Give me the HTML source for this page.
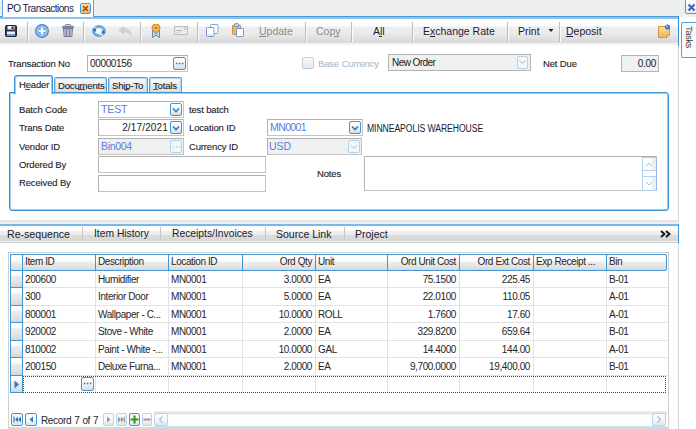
<!DOCTYPE html>
<html><head><meta charset="utf-8">
<style>
*{box-sizing:border-box;margin:0;padding:0}
html,body{width:696px;height:429px;overflow:hidden;background:#fff}
body{position:relative;font-family:"Liberation Sans",sans-serif;font-size:10px;color:#1a1a2a}
.a{position:absolute}
.t{position:absolute;white-space:pre;line-height:1}
.sep{position:absolute;top:22px;width:2px;height:20px;background:linear-gradient(90deg,#bdbdbd 50%,#fbfbfb 50%)}
.tb{position:absolute;border:1px solid #c4c4c4;border-top-color:#b0b0b0;border-left-color:#b4b4b4;background:#fff}
.dd{position:absolute;width:12px;height:13px;border:1.5px solid #3d96d6;border-radius:2px;background:linear-gradient(#fdfdfd 0%,#f2f2f2 55%,#dcdcdc 100%)}
.dd svg{position:absolute;left:1px;top:2px}
.gh{position:absolute;top:255px;height:15px;background:linear-gradient(#fefefe 0%,#fbfbfb 40%,#ececec 48%,#e4e4e4 75%,#d8d8d8 100%)}
.lbl{position:absolute;white-space:pre;line-height:1;font-size:9.5px;letter-spacing:-0.15px;color:#1a1a26;-webkit-text-stroke:0.1px currentColor}
.gt{position:absolute;white-space:pre;line-height:1;font-size:10px;letter-spacing:-0.4px;color:#262626}
</style></head><body>

<!-- top tab strip -->
<div class="a" style="left:0;top:0;width:696px;height:17px;background:#eeefef"></div>
<div class="a" style="left:2px;top:0;width:92px;height:17px;background:#fff;border:1px solid #5aa2d9;border-top:none;border-bottom:none"></div>
<div class="t" style="left:7px;top:4px;font-size:10px;letter-spacing:-0.5px;color:#1a1a40">PO Transactions</div>
<div class="a" style="left:80px;top:3px;width:11px;height:11px;border:1px solid #4a9ad6;border-radius:2px;background:linear-gradient(#fde0b0,#f4b66a)"></div>
<svg class="a" style="left:82px;top:5px" width="7" height="7"><path d="M1 1L6 6M6 1L1 6" stroke="#9a4a10" stroke-width="1.6"/></svg>
<!-- window close X -->
<div class="a" style="left:685px;top:-2px;width:13px;height:16px;border:1px solid #4a98d6;border-radius:2px;background:linear-gradient(#ffffff,#e8ecf0)"></div>
<svg class="a" style="left:687px;top:3px" width="9" height="9"><path d="M1.5 1.5L7.5 7.5M7.5 1.5L1.5 7.5" stroke="#2a6cc0" stroke-width="2"/></svg>

<!-- blue line -->
<div class="a" style="left:0;top:16px;width:3px;height:1px;background:#4b9bd8"></div>
<div class="a" style="left:93px;top:16px;width:586px;height:1px;background:#4b9bd8"></div>
<div class="a" style="left:0;top:17px;width:679px;height:2px;background:#8ec2e8"></div>
<div class="a" style="left:678px;top:16px;width:1px;height:30px;background:#3c8fd0"></div>

<!-- Tasks side tab -->
<div class="a" style="left:681px;top:22px;width:16px;height:36px;border:1px solid #5a9ed8;border-right:none;border-radius:2px 0 0 2px;background:#fafbfc"></div>
<div class="t" style="left:684px;top:26px;font-size:9.5px;letter-spacing:-0.5px;writing-mode:vertical-rl;color:#3a3a3a">Tasks</div>

<!-- toolbar -->
<div class="a" style="left:0;top:19px;width:678px;height:27px;background:linear-gradient(#fff 0px,#fdfdfd 7px,#eeeeee 8px,#ebebeb 15px,#e5e5e5 16px,#e3e3e3 19px,#dcdcdc 20px,#dadada 24px,#f3f3f3 24px,#f3f3f3 26px,#fff 26px)"></div>
<div class="sep" style="left:27px"></div>
<div class="sep" style="left:83px"></div>
<div class="sep" style="left:140px"></div>
<div class="sep" style="left:197px"></div>
<div class="sep" style="left:305px"></div>
<div class="sep" style="left:351px"></div>
<div class="sep" style="left:412px"></div>
<div class="sep" style="left:507px"></div>
<div class="sep" style="left:559px"></div>

<!-- icons -->
<svg class="a" style="left:5px;top:25px" width="12" height="12" viewBox="0 0 12 12">
 <rect x="0.5" y="0.5" width="11" height="11" rx="1" fill="#2f3a4a" stroke="#1d2430"/>
 <rect x="2.5" y="1" width="7" height="3.5" fill="#f4f4f4"/><rect x="6.5" y="1.5" width="2" height="2.5" fill="#222"/>
 <rect x="2" y="6.5" width="8" height="4.5" fill="#eef4fa"/><rect x="2" y="9" width="8" height="2" fill="#5fa0dc"/>
</svg>
<svg class="a" style="left:35px;top:24px" width="14" height="14" viewBox="0 0 14 14">
 <circle cx="7" cy="7" r="6.4" fill="#74b2ea" stroke="#4a86c8" stroke-width="1.1"/>
 <circle cx="7" cy="7" r="5" fill="none" stroke="#a8d2f4" stroke-width="0.8"/>
 <path d="M7 3.6V10.4M3.6 7H10.4" stroke="#fff" stroke-width="2.2"/>
</svg>
<svg class="a" style="left:62px;top:24px" width="12" height="13" viewBox="0 0 12 13">
 <rect x="3.5" y="0.5" width="5" height="2" rx="0.8" fill="none" stroke="#6a7088" stroke-width="0.9"/>
 <rect x="0.5" y="2.2" width="11" height="2" rx="0.8" fill="#8a90a4" stroke="#6a7088" stroke-width="0.8"/>
 <path d="M1.5 4.5H10.5L9.8 12.5H2.2Z" fill="#a4aabc" stroke="#6a7088" stroke-width="0.9"/>
 <path d="M4.2 5.5V11.5M7.8 5.5V11.5" stroke="#6a7088" stroke-width="1"/>
 <path d="M3 5.5V11.5M6 5.5V11.5M9 5.5V11.5" stroke="#d4d8e4" stroke-width="0.8"/>
</svg>
<svg class="a" style="left:92px;top:25px" width="14" height="12" viewBox="0 0 14 12">
 <ellipse cx="7" cy="6" rx="5.3" ry="4.3" fill="none" stroke="#6cb0ea" stroke-width="2.4"/>
 <ellipse cx="7" cy="6" rx="6.5" ry="5.5" fill="none" stroke="#3d7cc8" stroke-width="0.7" opacity="0.8"/>
 <path d="M2.5 2.5L7.5 6L5 7.5L11 10.5" fill="none" stroke="#fff" stroke-width="1.3"/>
 <path d="M0.5 4.5L4.5 3L3.5 7Z" fill="#2f6ec4"/><path d="M13.5 7.5L9.5 9L10.5 5Z" fill="#2f6ec4"/>
</svg>
<svg class="a" style="left:118px;top:26px" width="14" height="10" viewBox="0 0 14 10">
 <path d="M1 4L5.5 0.5V2.5C9.5 2.5 12.5 4.5 13 9C11 6.5 9 5.8 5.5 5.8V7.8Z" fill="#d2d2d2" stroke="#bdbdbd" stroke-width="0.6"/>
</svg>
<svg class="a" style="left:151px;top:24px" width="10" height="14" viewBox="0 0 10 14">
 <path d="M1.5 6.5H8.5V13.5L5 11.2L1.5 13.5Z" fill="#b4d8f4" stroke="#4a74b8" stroke-width="0.8"/>
 <path d="M5 10L1.6 5.8A4 4 0 1 1 8.4 5.8Z" fill="#f2a93a" stroke="#c47a1a" stroke-width="0.8"/>
 <circle cx="5" cy="4" r="2.6" fill="#f8c060"/>
 <rect x="3.8" y="3.2" width="2.4" height="1.6" fill="#a05a10"/>
</svg>
<svg class="a" style="left:174px;top:26px" width="14" height="9" viewBox="0 0 14 9">
 <rect x="0.5" y="0.5" width="13" height="8" fill="#ececec" stroke="#bcbcbc"/>
 <path d="M2.5 4.5H7.5" stroke="#b0b0b0"/><path d="M2.5 6.5H6" stroke="#d4d4d4"/><rect x="10.5" y="1.8" width="1.6" height="1.6" fill="none" stroke="#c0c0c0" stroke-width="0.7"/>
</svg>
<svg class="a" style="left:206px;top:24px" width="13" height="13" viewBox="0 0 13 13">
 <rect x="4.5" y="0.5" width="7.5" height="9" rx="0.8" fill="#fff" stroke="#88a6d8"/>
 <rect x="0.5" y="3.5" width="7.5" height="9" rx="0.8" fill="#fff" stroke="#7896d0"/>
 <rect x="1.5" y="10" width="6" height="2" fill="#dde6f4"/>
</svg>
<svg class="a" style="left:232px;top:23px" width="12" height="14" viewBox="0 0 12 14">
 <rect x="0.5" y="2" width="8" height="9.5" rx="1" fill="#f0b860" stroke="#c88a3a" stroke-width="0.9"/>
 <rect x="2.5" y="0.5" width="4" height="3" rx="1" fill="#c8d4ec" stroke="#6a7ab0" stroke-width="0.8"/>
 <rect x="4.5" y="5.5" width="7" height="8" rx="0.6" fill="#fff" stroke="#7896d0"/>
</svg>
<svg class="a" style="left:658px;top:24px" width="13" height="14" viewBox="0 0 13 14">
 <defs><linearGradient id="ng" x1="0" y1="0" x2="0" y2="1"><stop offset="0" stop-color="#fde2a8"/><stop offset="1" stop-color="#f0b058"/></linearGradient></defs>
 <path d="M0.5 2.5H11.5V11L9 13.5H0.5Z" fill="url(#ng)" stroke="#d0943c"/>
 <path d="M9 13.5V11H11.5" fill="#f8d89a" stroke="#d0943c" stroke-width="0.8"/>
 <circle cx="9.5" cy="3" r="2.6" fill="#3a7ed0"/><circle cx="9" cy="2.4" r="1" fill="#9cc8f4"/>
</svg>

<!-- toolbar text -->
<div class="t" style="left:259px;top:26px;font-size:10.5px;color:#8a8a8a">Update</div>
<div class="a" style="left:259px;top:36px;width:7px;height:1px;background:#8a8a8a"></div>
<div class="t" style="left:316px;top:26px;font-size:10.5px;color:#8a8a8a">Copy</div>
<div class="t" style="left:373px;top:26px;font-size:10.5px;color:#1a1a38">All</div>
<div class="a" style="left:379px;top:36px;width:3px;height:1px;background:#1a1a38"></div>
<div class="t" style="left:423px;top:26px;font-size:10.5px;color:#1a1a38">Exchange Rate</div>
<div class="a" style="left:430px;top:36px;width:5px;height:1px;background:#1a1a38"></div>
<div class="t" style="left:518px;top:26px;font-size:10.5px;color:#1a1a38">Print</div>
<svg class="a" style="left:548px;top:29px" width="6" height="4"><path d="M0.5 0H5.5L3 3Z" fill="#222"/></svg>
<div class="t" style="left:566px;top:26px;font-size:10.5px;color:#1a1a38">Deposit</div>
<div class="a" style="left:566px;top:36px;width:7px;height:1px;background:#1a1a38"></div>

<!-- content right border -->
<div class="a" style="left:678px;top:46px;width:1px;height:175px;background:#d6d6d6"></div>
<div class="a" style="left:0;top:220px;width:679px;height:4px;background:linear-gradient(#e0e0e0,#f4f4f4)"></div>

<!-- Transaction row -->
<div class="lbl" style="left:8px;top:59px">Transaction No</div>
<div class="tb" style="left:87px;top:55px;width:101px;height:17px"></div>
<div class="t" style="left:90px;top:59px;font-size:10px;letter-spacing:-0.35px;color:#1a1a1a">00000156</div>
<div class="a" style="left:173px;top:57px;width:13px;height:13px;border:1px solid #3b93d4;border-radius:2px;background:linear-gradient(#fdfdfd 0%,#f4f4f4 50%,#dadada 100%)"></div>
<svg class="a" style="left:175px;top:62px" width="10" height="3"><path d="M0.8 1.5h1.6M3.8 1.5h1.6M6.8 1.5h1.6" stroke="#2a78c8" stroke-width="1.7"/></svg>

<div class="a" style="left:302px;top:57px;width:12px;height:12px;border:1px solid #b8d0e4;border-radius:2px;background:linear-gradient(#fafafa,#e4e8ec)"></div>
<div class="lbl" style="left:318px;top:59px;color:#a8bcd0">Base Currency</div>
<div class="a" style="left:388px;top:54px;width:143px;height:17px;border:1px solid #b4b4b4;background:#eff0f0"></div>
<div class="t" style="left:392px;top:58px;font-size:10px;letter-spacing:-0.55px;color:#1a1a1a">New Order</div>
<div class="a" style="left:517px;top:56px;width:11px;height:13px;border:1px solid #b4d0ea;border-radius:2px;background:#f4f7fa"></div>
<svg class="a" style="left:519px;top:60px" width="7" height="5"><path d="M0.5 0.5L3.5 3.5L6.5 0.5" fill="none" stroke="#9ab8d8" stroke-width="1"/></svg>
<div class="lbl" style="left:543px;top:59px">Net Due</div>
<div class="a" style="left:621px;top:55px;width:38px;height:17px;border:1px solid #b4b4b4;background:#eff0f0"></div>
<div class="t" style="left:624px;top:59px;width:32px;text-align:right;font-size:10px;letter-spacing:-0.3px;color:#1a1a1a">0.00</div>

<!-- tabs -->
<div class="a" style="left:9px;top:92px;width:660px;height:119px;border:1px solid #3a93d4;box-shadow:inset 0 0 0 1px #9fcdee;border-radius:0 3px 3px 3px;background:#fff"></div>
<div class="a" style="left:54px;top:77px;width:53px;height:15px;border:1px solid #56a2da;border-bottom:none;border-radius:2px 2px 0 0;box-shadow:inset 1px 1px 0 #b4d8f2,inset -1px 0 0 #b4d8f2;background:linear-gradient(#fbfbfb,#e8e8e8 60%,#dedede)"></div>
<div class="a" style="left:108px;top:77px;width:40px;height:15px;border:1px solid #56a2da;border-bottom:none;border-radius:2px 2px 0 0;box-shadow:inset 1px 1px 0 #b4d8f2,inset -1px 0 0 #b4d8f2;background:linear-gradient(#fbfbfb,#e8e8e8 60%,#dedede)"></div>
<div class="a" style="left:149px;top:77px;width:33px;height:15px;border:1px solid #56a2da;border-bottom:none;border-radius:2px 2px 0 0;box-shadow:inset 1px 1px 0 #b4d8f2,inset -1px 0 0 #b4d8f2;background:linear-gradient(#fbfbfb,#e8e8e8 60%,#dedede)"></div>
<div class="a" style="left:14px;top:75px;width:39px;height:19px;border:1px solid #3a93d4;border-bottom:none;border-radius:3px 3px 0 0;background:#fff;box-shadow:inset 1px 1px 0 #9fcdee,inset -1px 0 0 #9fcdee"></div>
<div class="lbl" style="left:19px;top:80px">Header</div>
<div class="lbl" style="left:58px;top:81px">Documents</div>
<div class="lbl" style="left:112px;top:81px">Ship-To</div>
<div class="lbl" style="left:153px;top:81px">Totals</div>

<div class="a" style="left:25px;top:89px;width:5px;height:1px;background:#555"></div>
<div class="a" style="left:78px;top:89px;width:7px;height:1px;background:#555"></div>
<div class="a" style="left:124px;top:89px;width:5px;height:1px;background:#555"></div>
<div class="a" style="left:153px;top:89px;width:5px;height:1px;background:#555"></div>
<div class="a" style="left:334px;top:36px;width:5px;height:1px;background:#8a8a8a"></div>
<!-- header panel fields -->
<div class="lbl" style="left:19px;top:105px">Batch Code</div>
<div class="lbl" style="left:19px;top:123px">Trans Date</div>
<div class="lbl" style="left:19px;top:142px">Vendor ID</div>
<div class="lbl" style="left:19px;top:160px">Ordered By</div>
<div class="lbl" style="left:19px;top:178px">Received By</div>

<div class="tb" style="left:98px;top:101px;width:86px;height:17px"></div>
<div class="t" style="left:101px;top:104px;font-size:10.5px;letter-spacing:-0.1px;color:#5a7edc">TEST</div>
<div class="dd" style="left:170px;top:103px"><svg width="10" height="11" style="position:absolute;left:0;top:0"><path d="M2 4.5L5 7.5L8 4.5" fill="none" stroke="#2a7ec8" stroke-width="1.6"/></svg></div>
<div class="tb" style="left:98px;top:119px;width:86px;height:17px"></div>
<div class="t" style="left:100px;top:123px;width:68px;text-align:right;font-size:10px;letter-spacing:0.15px;color:#1a1a1a">2/17/2021</div>
<div class="dd" style="left:170px;top:121px"><svg width="10" height="11" style="position:absolute;left:0;top:0"><path d="M2 4.5L5 7.5L8 4.5" fill="none" stroke="#2a7ec8" stroke-width="1.6"/></svg></div>
<div class="tb" style="left:98px;top:138px;width:86px;height:17px;background:#eff0f0"></div>
<div class="t" style="left:101px;top:141px;font-size:10.5px;letter-spacing:-0.3px;color:#5a7edc">Bin004</div>
<div class="a" style="left:170px;top:140px;width:12px;height:13px;border:1px solid #b4d0ea;border-radius:2px;background:#f4f7fa"></div>
<svg class="a" style="left:172px;top:146px" width="9" height="2"><path d="M0.5 1h1.2M3.9 1h1.2M7.3 1h1.2" stroke="#8ab4dc" stroke-width="1.2"/></svg>
<div class="tb" style="left:98px;top:156px;width:168px;height:17px"></div>
<div class="tb" style="left:98px;top:175px;width:168px;height:17px"></div>

<div class="lbl" style="left:189px;top:105px">test batch</div>
<div class="lbl" style="left:189px;top:123px">Location ID</div>
<div class="lbl" style="left:189px;top:142px">Currency ID</div>
<div class="tb" style="left:267px;top:119px;width:96px;height:17px"></div>
<div class="t" style="left:270px;top:122px;font-size:10.5px;letter-spacing:-0.6px;color:#5a7edc">MN0001</div>
<div class="dd" style="left:349px;top:121px"><svg width="10" height="11" style="position:absolute;left:0;top:0"><path d="M2 4.5L5 7.5L8 4.5" fill="none" stroke="#2a7ec8" stroke-width="1.6"/></svg></div>
<div class="tb" style="left:267px;top:138px;width:95px;height:17px;background:#eff0f0"></div>
<div class="t" style="left:269px;top:141px;font-size:10.5px;letter-spacing:-0.1px;color:#5a7edc">USD</div>
<div class="a" style="left:348px;top:140px;width:12px;height:13px;border:1px solid #b4d0ea;border-radius:2px;background:#f4f7fa"></div>
<svg class="a" style="left:350px;top:145px" width="8" height="5"><path d="M1 0.5L4 3.5L7 0.5" fill="none" stroke="#9cc0e0" stroke-width="1"/></svg>
<div class="t" style="left:367px;top:124px;font-size:10px;letter-spacing:-0.1px;transform:scaleX(0.865);transform-origin:0 0;color:#20202c">MINNEAPOLIS WAREHOUSE</div>
<div class="lbl" style="left:317px;top:169px">Notes</div>
<div class="tb" style="left:364px;top:156px;width:293px;height:35px"></div>
<div class="a" style="left:642px;top:157px;width:15px;height:34px;border:1px solid #b4d2ec;border-right-color:#9fb4dc;background:linear-gradient(90deg,#fdfdfd 70%,#eeeeee 70%)"></div>
<div class="a" style="left:643px;top:170px;width:13px;height:1px;background:#b4d2ec"></div>
<div class="a" style="left:643px;top:176px;width:13px;height:1px;background:#b4d2ec"></div>
<div class="a" style="left:643px;top:171px;width:13px;height:5px;background:#fafcfd"></div>
<svg class="a" style="left:645px;top:162px" width="8" height="5"><path d="M1 4L4 1L7 4" fill="none" stroke="#9cc0e0" stroke-width="1"/></svg>
<svg class="a" style="left:645px;top:181px" width="8" height="5"><path d="M1 1L4 4L7 1" fill="none" stroke="#9cc0e0" stroke-width="1"/></svg>

<!-- lower tab bar -->
<div class="a" style="left:0;top:224px;width:679px;height:19px;border-top:2px solid #7db8e4;border-right:1px solid #3c93d4;background:linear-gradient(#fdfdfd 0px,#fdfdfd 5px,#efefef 5px,#ececec 9px,#dcdcdc 9px,#d8d8d8 15px,#f6f6f6 15px,#f6f6f6 16px,#c8c8c8 16px)"></div>
<div class="t" style="left:7px;top:229px;font-size:10.6px;color:#1a1a2a">Re-sequence</div>
<div class="t" style="left:94px;top:229px;font-size:10.3px;color:#1a1a2a">Item History</div>
<div class="t" style="left:172px;top:229px;font-size:10.3px;color:#1a1a2a">Receipts/Invoices</div>
<div class="t" style="left:276px;top:229px;font-size:10.5px;color:#1a1a2a">Source Link</div>
<div class="t" style="left:355px;top:229px;font-size:10.5px;color:#1a1a2a">Project</div>
<div class="a" style="left:82px;top:227px;width:1px;height:14px;background:#c8c8c8"></div>
<div class="a" style="left:160px;top:227px;width:1px;height:14px;background:#c8c8c8"></div>
<div class="a" style="left:265px;top:227px;width:1px;height:14px;background:#c8c8c8"></div>
<div class="a" style="left:344px;top:227px;width:1px;height:14px;background:#c8c8c8"></div>
<svg class="a" style="left:660px;top:230px" width="11" height="8" viewBox="0 0 11 8"><path d="M1 1L4.5 4L1 7M6 1L9.5 4L6 7" fill="none" stroke="#111" stroke-width="1.8"/></svg>

<!-- lower content border -->
<div class="a" style="left:678px;top:243px;width:1px;height:186px;background:#d6d6d6"></div>

<!-- grid -->
<div class="a" style="left:8px;top:252px;width:661px;height:177px;border:1px solid #cfcfcf;border-bottom:2px solid #d6d6d6"></div>
<div class="gh" style="left:11px;width:656px"></div>
<div class="a" style="left:10px;top:254px;width:657px;height:17px;border:1px solid #4196d6;border-radius:2px"></div>
<div class="a" style="left:10px;top:254px;width:13px;height:139px;border:1px solid #4196d6;border-top:none"></div>
<div class="a" style="left:22px;top:255px;width:1px;height:15px;background:#4196d6"></div>
<div class="a" style="left:95px;top:255px;width:1px;height:15px;background:#4196d6"></div>
<div class="a" style="left:168px;top:255px;width:1px;height:15px;background:#4196d6"></div>
<div class="a" style="left:242px;top:255px;width:1px;height:15px;background:#4196d6"></div>
<div class="a" style="left:315px;top:255px;width:1px;height:15px;background:#4196d6"></div>
<div class="a" style="left:387px;top:255px;width:1px;height:15px;background:#4196d6"></div>
<div class="a" style="left:459px;top:255px;width:1px;height:15px;background:#4196d6"></div>
<div class="a" style="left:533px;top:255px;width:1px;height:15px;background:#4196d6"></div>
<div class="a" style="left:606px;top:255px;width:1px;height:15px;background:#4196d6"></div>
<div class="gt" style="left:25px;top:257px">Item ID</div>
<div class="gt" style="left:98px;top:257px">Description</div>
<div class="gt" style="left:171px;top:257px">Location ID</div>
<div class="gt" style="left:242px;top:257px;width:70px;text-align:right">Ord Qty</div>
<div class="gt" style="left:318px;top:257px">Unit</div>
<div class="gt" style="left:387px;top:257px;width:69px;text-align:right">Ord Unit Cost</div>
<div class="gt" style="left:459px;top:257px;width:71px;text-align:right">Ord Ext Cost</div>
<div class="gt" style="left:536px;top:257px">Exp Receipt ...</div>
<div class="gt" style="left:609px;top:257px">Bin</div>
<div class="a" style="left:11px;top:271px;width:11px;height:16px;background:linear-gradient(#fdfdfd 0%,#fafafa 30%,#ebebeb 35%,#e4e4e4 70%,#d6d6d6 100%)"></div>
<div class="a" style="left:10px;top:287px;width:13px;height:1px;background:#4196d6"></div>
<div class="a" style="left:23px;top:287px;width:644px;height:1px;background:#e2e2e2"></div>
<div class="a" style="left:95px;top:271px;width:1px;height:17px;background:#e2e2e2"></div>
<div class="a" style="left:168px;top:271px;width:1px;height:17px;background:#e2e2e2"></div>
<div class="a" style="left:242px;top:271px;width:1px;height:17px;background:#e2e2e2"></div>
<div class="a" style="left:315px;top:271px;width:1px;height:17px;background:#e2e2e2"></div>
<div class="a" style="left:387px;top:271px;width:1px;height:17px;background:#e2e2e2"></div>
<div class="a" style="left:459px;top:271px;width:1px;height:17px;background:#e2e2e2"></div>
<div class="a" style="left:533px;top:271px;width:1px;height:17px;background:#e2e2e2"></div>
<div class="a" style="left:606px;top:271px;width:1px;height:17px;background:#e2e2e2"></div>
<div class="gt" style="left:25px;top:275px">200600</div>
<div class="gt" style="left:98px;top:275px">Humidifier</div>
<div class="gt" style="left:171px;top:275px">MN0001</div>
<div class="gt" style="left:242px;top:275px;width:70px;text-align:right">3.0000</div>
<div class="gt" style="left:318px;top:275px">EA</div>
<div class="gt" style="left:387px;top:275px;width:69px;text-align:right">75.1500</div>
<div class="gt" style="left:459px;top:275px;width:71px;text-align:right">225.45</div>
<div class="gt" style="left:609px;top:275px">B-01</div>
<div class="a" style="left:11px;top:288px;width:11px;height:17px;background:linear-gradient(#fdfdfd 0%,#fafafa 30%,#ebebeb 35%,#e4e4e4 70%,#d6d6d6 100%)"></div>
<div class="a" style="left:10px;top:305px;width:13px;height:1px;background:#4196d6"></div>
<div class="a" style="left:23px;top:305px;width:644px;height:1px;background:#e2e2e2"></div>
<div class="a" style="left:95px;top:288px;width:1px;height:18px;background:#e2e2e2"></div>
<div class="a" style="left:168px;top:288px;width:1px;height:18px;background:#e2e2e2"></div>
<div class="a" style="left:242px;top:288px;width:1px;height:18px;background:#e2e2e2"></div>
<div class="a" style="left:315px;top:288px;width:1px;height:18px;background:#e2e2e2"></div>
<div class="a" style="left:387px;top:288px;width:1px;height:18px;background:#e2e2e2"></div>
<div class="a" style="left:459px;top:288px;width:1px;height:18px;background:#e2e2e2"></div>
<div class="a" style="left:533px;top:288px;width:1px;height:18px;background:#e2e2e2"></div>
<div class="a" style="left:606px;top:288px;width:1px;height:18px;background:#e2e2e2"></div>
<div class="gt" style="left:25px;top:292px">300</div>
<div class="gt" style="left:98px;top:292px">Interior Door</div>
<div class="gt" style="left:171px;top:292px">MN0001</div>
<div class="gt" style="left:242px;top:292px;width:70px;text-align:right">5.0000</div>
<div class="gt" style="left:318px;top:292px">EA</div>
<div class="gt" style="left:387px;top:292px;width:69px;text-align:right">22.0100</div>
<div class="gt" style="left:459px;top:292px;width:71px;text-align:right">110.05</div>
<div class="gt" style="left:609px;top:292px">A-01</div>
<div class="a" style="left:11px;top:306px;width:11px;height:16px;background:linear-gradient(#fdfdfd 0%,#fafafa 30%,#ebebeb 35%,#e4e4e4 70%,#d6d6d6 100%)"></div>
<div class="a" style="left:10px;top:322px;width:13px;height:1px;background:#4196d6"></div>
<div class="a" style="left:23px;top:322px;width:644px;height:1px;background:#e2e2e2"></div>
<div class="a" style="left:95px;top:306px;width:1px;height:17px;background:#e2e2e2"></div>
<div class="a" style="left:168px;top:306px;width:1px;height:17px;background:#e2e2e2"></div>
<div class="a" style="left:242px;top:306px;width:1px;height:17px;background:#e2e2e2"></div>
<div class="a" style="left:315px;top:306px;width:1px;height:17px;background:#e2e2e2"></div>
<div class="a" style="left:387px;top:306px;width:1px;height:17px;background:#e2e2e2"></div>
<div class="a" style="left:459px;top:306px;width:1px;height:17px;background:#e2e2e2"></div>
<div class="a" style="left:533px;top:306px;width:1px;height:17px;background:#e2e2e2"></div>
<div class="a" style="left:606px;top:306px;width:1px;height:17px;background:#e2e2e2"></div>
<div class="gt" style="left:25px;top:310px">800001</div>
<div class="gt" style="left:98px;top:310px">Wallpaper - C...</div>
<div class="gt" style="left:171px;top:310px">MN0001</div>
<div class="gt" style="left:242px;top:310px;width:70px;text-align:right">10.0000</div>
<div class="gt" style="left:318px;top:310px">ROLL</div>
<div class="gt" style="left:387px;top:310px;width:69px;text-align:right">1.7600</div>
<div class="gt" style="left:459px;top:310px;width:71px;text-align:right">17.60</div>
<div class="gt" style="left:609px;top:310px">A-01</div>
<div class="a" style="left:11px;top:323px;width:11px;height:17px;background:linear-gradient(#fdfdfd 0%,#fafafa 30%,#ebebeb 35%,#e4e4e4 70%,#d6d6d6 100%)"></div>
<div class="a" style="left:10px;top:340px;width:13px;height:1px;background:#4196d6"></div>
<div class="a" style="left:23px;top:340px;width:644px;height:1px;background:#e2e2e2"></div>
<div class="a" style="left:95px;top:323px;width:1px;height:18px;background:#e2e2e2"></div>
<div class="a" style="left:168px;top:323px;width:1px;height:18px;background:#e2e2e2"></div>
<div class="a" style="left:242px;top:323px;width:1px;height:18px;background:#e2e2e2"></div>
<div class="a" style="left:315px;top:323px;width:1px;height:18px;background:#e2e2e2"></div>
<div class="a" style="left:387px;top:323px;width:1px;height:18px;background:#e2e2e2"></div>
<div class="a" style="left:459px;top:323px;width:1px;height:18px;background:#e2e2e2"></div>
<div class="a" style="left:533px;top:323px;width:1px;height:18px;background:#e2e2e2"></div>
<div class="a" style="left:606px;top:323px;width:1px;height:18px;background:#e2e2e2"></div>
<div class="gt" style="left:25px;top:327px">920002</div>
<div class="gt" style="left:98px;top:327px">Stove - White</div>
<div class="gt" style="left:171px;top:327px">MN0001</div>
<div class="gt" style="left:242px;top:327px;width:70px;text-align:right">2.0000</div>
<div class="gt" style="left:318px;top:327px">EA</div>
<div class="gt" style="left:387px;top:327px;width:69px;text-align:right">329.8200</div>
<div class="gt" style="left:459px;top:327px;width:71px;text-align:right">659.64</div>
<div class="gt" style="left:609px;top:327px">B-01</div>
<div class="a" style="left:11px;top:341px;width:11px;height:16px;background:linear-gradient(#fdfdfd 0%,#fafafa 30%,#ebebeb 35%,#e4e4e4 70%,#d6d6d6 100%)"></div>
<div class="a" style="left:10px;top:357px;width:13px;height:1px;background:#4196d6"></div>
<div class="a" style="left:23px;top:357px;width:644px;height:1px;background:#e2e2e2"></div>
<div class="a" style="left:95px;top:341px;width:1px;height:17px;background:#e2e2e2"></div>
<div class="a" style="left:168px;top:341px;width:1px;height:17px;background:#e2e2e2"></div>
<div class="a" style="left:242px;top:341px;width:1px;height:17px;background:#e2e2e2"></div>
<div class="a" style="left:315px;top:341px;width:1px;height:17px;background:#e2e2e2"></div>
<div class="a" style="left:387px;top:341px;width:1px;height:17px;background:#e2e2e2"></div>
<div class="a" style="left:459px;top:341px;width:1px;height:17px;background:#e2e2e2"></div>
<div class="a" style="left:533px;top:341px;width:1px;height:17px;background:#e2e2e2"></div>
<div class="a" style="left:606px;top:341px;width:1px;height:17px;background:#e2e2e2"></div>
<div class="gt" style="left:25px;top:345px">810002</div>
<div class="gt" style="left:98px;top:345px">Paint - White -...</div>
<div class="gt" style="left:171px;top:345px">MN0001</div>
<div class="gt" style="left:242px;top:345px;width:70px;text-align:right">10.0000</div>
<div class="gt" style="left:318px;top:345px">GAL</div>
<div class="gt" style="left:387px;top:345px;width:69px;text-align:right">14.4000</div>
<div class="gt" style="left:459px;top:345px;width:71px;text-align:right">144.00</div>
<div class="gt" style="left:609px;top:345px">A-01</div>
<div class="a" style="left:11px;top:358px;width:11px;height:17px;background:linear-gradient(#fdfdfd 0%,#fafafa 30%,#ebebeb 35%,#e4e4e4 70%,#d6d6d6 100%)"></div>
<div class="a" style="left:10px;top:375px;width:13px;height:1px;background:#4196d6"></div>
<div class="a" style="left:23px;top:375px;width:644px;height:1px;background:#e2e2e2"></div>
<div class="a" style="left:95px;top:358px;width:1px;height:18px;background:#e2e2e2"></div>
<div class="a" style="left:168px;top:358px;width:1px;height:18px;background:#e2e2e2"></div>
<div class="a" style="left:242px;top:358px;width:1px;height:18px;background:#e2e2e2"></div>
<div class="a" style="left:315px;top:358px;width:1px;height:18px;background:#e2e2e2"></div>
<div class="a" style="left:387px;top:358px;width:1px;height:18px;background:#e2e2e2"></div>
<div class="a" style="left:459px;top:358px;width:1px;height:18px;background:#e2e2e2"></div>
<div class="a" style="left:533px;top:358px;width:1px;height:18px;background:#e2e2e2"></div>
<div class="a" style="left:606px;top:358px;width:1px;height:18px;background:#e2e2e2"></div>
<div class="gt" style="left:25px;top:362px">200150</div>
<div class="gt" style="left:98px;top:362px">Deluxe Furna...</div>
<div class="gt" style="left:171px;top:362px">MN0001</div>
<div class="gt" style="left:242px;top:362px;width:70px;text-align:right">2.0000</div>
<div class="gt" style="left:318px;top:362px">EA</div>
<div class="gt" style="left:387px;top:362px;width:69px;text-align:right">9,700.0000</div>
<div class="gt" style="left:459px;top:362px;width:71px;text-align:right">19,400.00</div>
<div class="gt" style="left:609px;top:362px">B-01</div>
<div class="a" style="left:11px;top:376px;width:11px;height:16px;background:linear-gradient(#fdfdfd 0%,#fafafa 30%,#ebebeb 35%,#e4e4e4 70%,#d6d6d6 100%)"></div>
<div class="a" style="left:10px;top:392px;width:13px;height:1px;background:#4196d6"></div>
<div class="a" style="left:95px;top:376px;width:1px;height:17px;background:#e2e2e2"></div>
<div class="a" style="left:168px;top:376px;width:1px;height:17px;background:#e2e2e2"></div>
<div class="a" style="left:242px;top:376px;width:1px;height:17px;background:#e2e2e2"></div>
<div class="a" style="left:315px;top:376px;width:1px;height:17px;background:#e2e2e2"></div>
<div class="a" style="left:387px;top:376px;width:1px;height:17px;background:#e2e2e2"></div>
<div class="a" style="left:459px;top:376px;width:1px;height:17px;background:#e2e2e2"></div>
<div class="a" style="left:533px;top:376px;width:1px;height:17px;background:#e2e2e2"></div>
<div class="a" style="left:606px;top:376px;width:1px;height:17px;background:#e2e2e2"></div>
<div class="a" style="left:23px;top:376px;width:643px;height:17px;border:1px dotted #444"></div>
<svg class="a" style="left:14px;top:380px" width="6" height="9"><path d="M0.5 0.5L5 4.5L0.5 8.5Z" fill="#2a7ed0"/></svg>
<div class="a" style="left:81px;top:377px;width:13px;height:14px;border:1px solid #4196d6;border-radius:2px;background:linear-gradient(#fdfdfd 0%,#f4f4f4 50%,#dadada 100%)"></div>
<svg class="a" style="left:83px;top:382px" width="10" height="3"><path d="M0.8 1.5h1.6M3.8 1.5h1.6M6.8 1.5h1.6" stroke="#2a78c8" stroke-width="1.7"/></svg>
<div class="a" style="left:11px;top:413px;width:12px;height:13px;border:1px solid #4196d6;border-radius:2px;background:linear-gradient(#fdfdfd 0%,#f6f6f6 55%,#e4e4e4 100%)"></div><svg class="a" style="left:11px;top:413px" width="12" height="13"><path d="M3 3.5V9.5" stroke="#2a7ed0" stroke-width="1.2"/><path d="M7 3.5L4 6.5L7 9.5ZM10 3.5L7 6.5L10 9.5Z" fill="#2a7ed0"/></svg>
<div class="a" style="left:25px;top:413px;width:12px;height:13px;border:1px solid #4196d6;border-radius:2px;background:linear-gradient(#fdfdfd 0%,#f6f6f6 55%,#e4e4e4 100%)"></div><svg class="a" style="left:25px;top:413px" width="12" height="13"><path d="M8 3.5L4.5 6.5L8 9.5Z" fill="#2a7ed0"/></svg>
<div class="gt" style="left:41px;top:416px;font-size:10px;letter-spacing:-0.35px;word-spacing:0.6px">Record 7 of 7</div>
<div class="a" style="left:103px;top:413px;width:11px;height:13px;border:1px solid #b2d4ee;border-radius:2px;background:linear-gradient(#fdfdfd 0%,#f6f6f6 55%,#e4e4e4 100%)"></div><svg class="a" style="left:103px;top:413px" width="11" height="13"><path d="M4 3.5L7.5 6.5L4 9.5Z" fill="#9a9a9a"/></svg>
<div class="a" style="left:116px;top:413px;width:11px;height:13px;border:1px solid #b2d4ee;border-radius:2px;background:linear-gradient(#fdfdfd 0%,#f6f6f6 55%,#e4e4e4 100%)"></div><svg class="a" style="left:116px;top:413px" width="11" height="13"><path d="M2 3.5L5 6.5L2 9.5ZM5 3.5L8 6.5L5 9.5Z" fill="#9a9a9a"/><path d="M8.5 3.5V9.5" stroke="#9a9a9a" stroke-width="1.2"/></svg>
<div class="a" style="left:129px;top:413px;width:11px;height:13px;border:1px solid #4196d6;border-radius:2px;background:linear-gradient(#fdfdfd 0%,#f6f6f6 55%,#e4e4e4 100%)"></div><svg class="a" style="left:129px;top:413px" width="11" height="13"><path d="M5.5 2.5V10.5M1.5 6.5H9.5" stroke="#2a9a20" stroke-width="2.2"/></svg>
<div class="a" style="left:142px;top:413px;width:10px;height:13px;border:1px solid #b2d4ee;border-radius:2px;background:linear-gradient(#fdfdfd 0%,#f6f6f6 55%,#e4e4e4 100%)"></div><svg class="a" style="left:142px;top:413px" width="10" height="13"><path d="M1.5 6.5H8.5" stroke="#9a9a9a" stroke-width="2"/></svg>
<div class="a" style="left:154px;top:411px;width:513px;height:16px;border-bottom:1px solid #c8e0f0;background:linear-gradient(#f2f2f2 0px,#e4e4e4 2px,#e8e8e8 3px,#fdfdfd 4px,#fff 15px)"></div>
<div class="a" style="left:154px;top:413px;width:14px;height:13px;border:1px solid #b2d4ee;border-radius:2px;background:linear-gradient(#fdfdfd 0%,#f6f6f6 55%,#e4e4e4 100%)"></div><svg class="a" style="left:154px;top:413px" width="14" height="13"><path d="M8.5 3.5L5.5 6.5L8.5 9.5" fill="none" stroke="#9ec4e6" stroke-width="1.2"/></svg>
<div class="a" style="left:652px;top:413px;width:14px;height:13px;border:1px solid #b2d4ee;border-radius:2px;background:linear-gradient(#fdfdfd 0%,#f6f6f6 55%,#e4e4e4 100%)"></div><svg class="a" style="left:652px;top:413px" width="14" height="13"><path d="M5.5 3.5L8.5 6.5L5.5 9.5" fill="none" stroke="#9ec4e6" stroke-width="1.2"/></svg>
</body></html>
